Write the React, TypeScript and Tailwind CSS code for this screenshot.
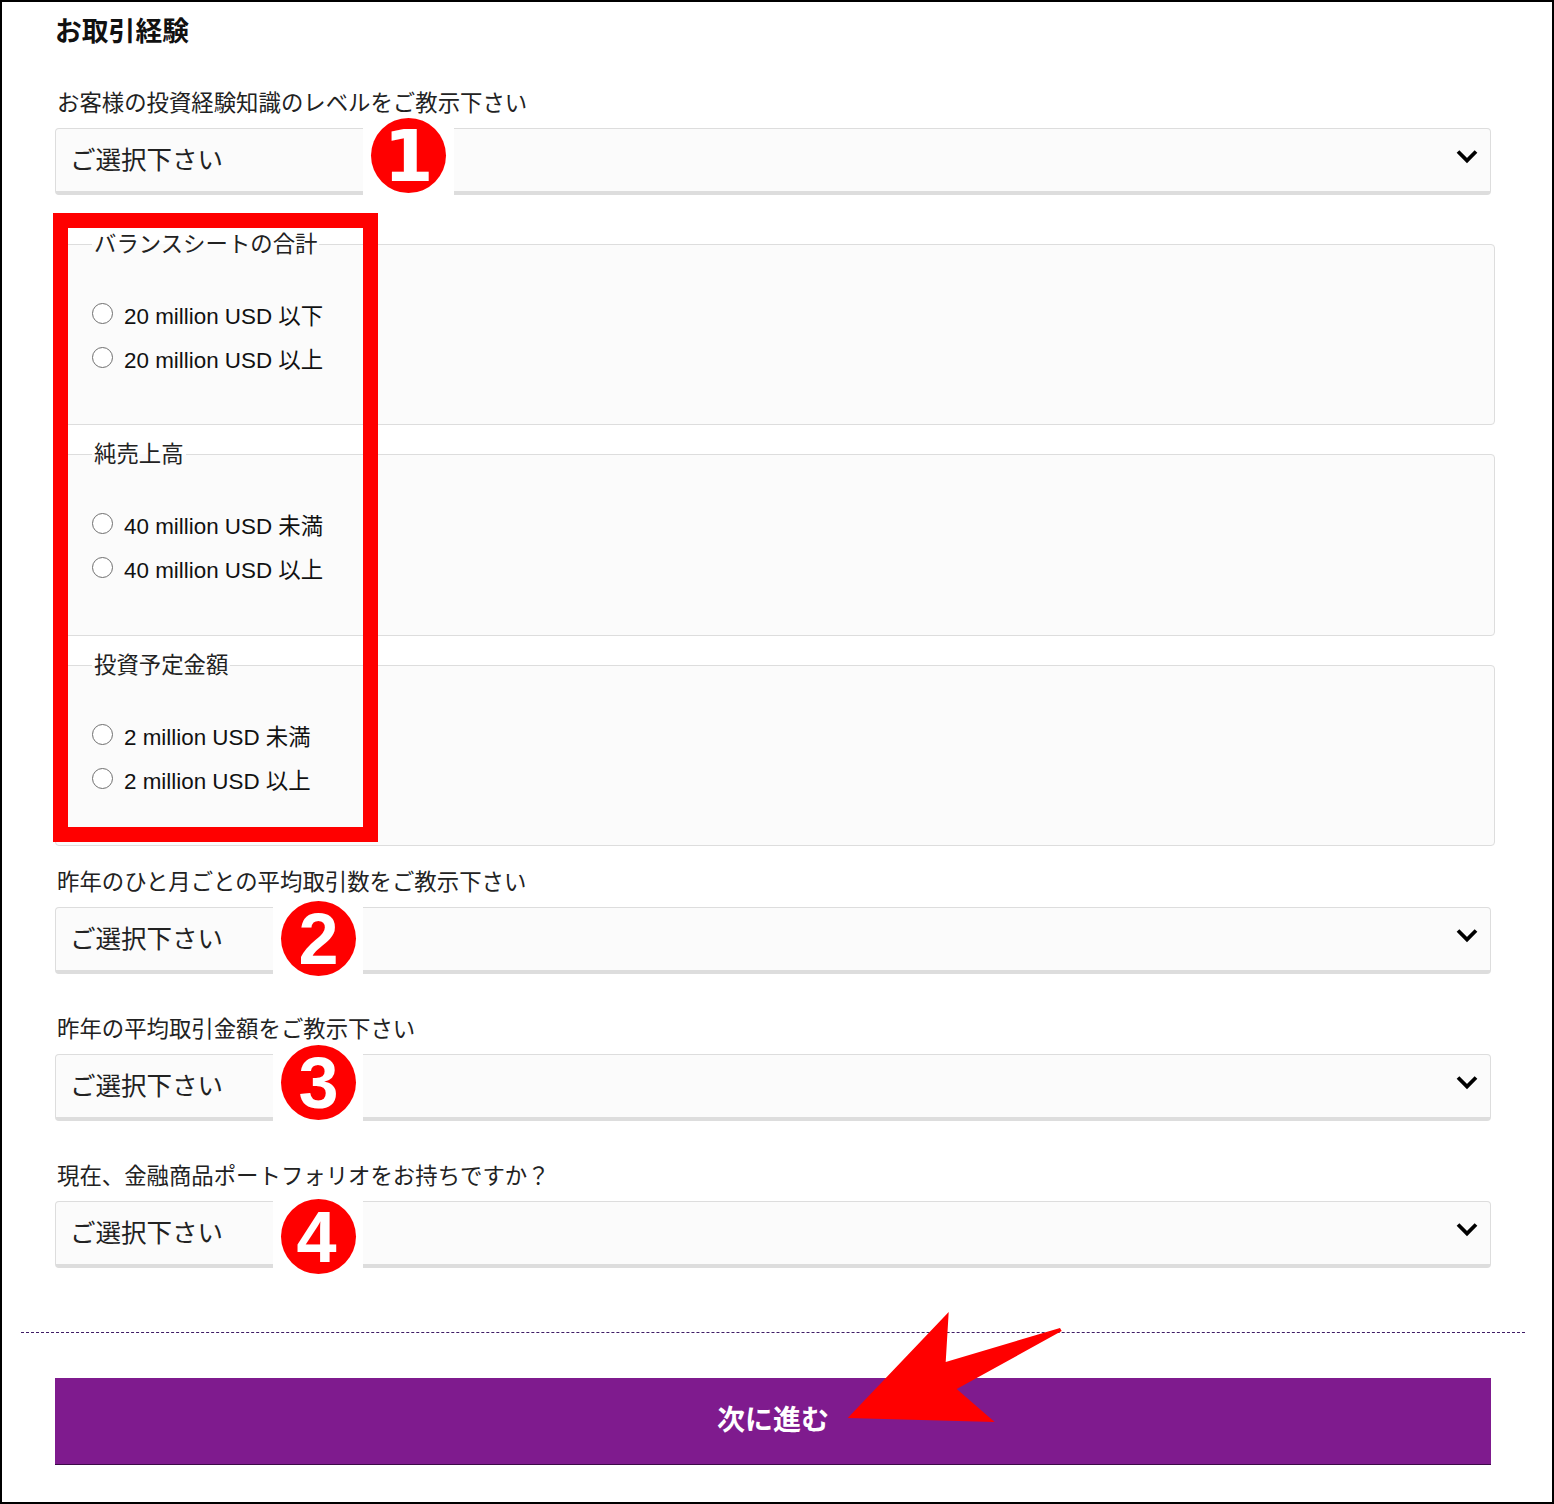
import React from "react";

function Chevron() {
  return (
    <svg className="absolute left-[1400px] top-[20px] w-[24px] h-[18px] pointer-events-none" viewBox="0 0 24 18" fill="none">
      <path d="M3 3.5 L12 12.5 L21 3.5" stroke="#000" strokeWidth="3.8" strokeLinecap="butt" />
    </svg>
  );
}

function SelectField({ label, className = "" }: { label: string; className?: string }) {
  return (
    <div className={className}>
      <label className="block h-[26px] leading-[26px] text-[22.4px] text-[#222] ml-[2px] whitespace-nowrap">{label}</label>
      <div className="relative w-[1436px] mt-[11.5px]">
        <select className="block appearance-none w-full h-[67px] pl-[14px] bg-[#fbfbfb] border border-[#dddddd] border-b-[4px] rounded-[4px] text-[25.5px] text-[#222] outline-none">
          <option>ご選択下さい</option>
        </select>
        <Chevron />
      </div>
    </div>
  );
}

function RadioGroup({ title, options, name, className }: { title: string; options: string[]; name: string; className: string }) {
  return (
    <fieldset className={`w-[1440px] border border-[#dddddd] rounded-[4px] bg-[#fbfbfb] pl-[36px] pr-0 pb-0 ${className}`}>
      <legend className="h-[26px] leading-[28px] text-[22.4px] text-[#222] px-[2px] whitespace-nowrap">{title}</legend>
      <div className="pt-[37px]">
        {options.map((o) => (
          <label key={o} className="flex items-center h-[43.7px] whitespace-nowrap">
            <input
              type="radio"
              name={name}
              className="appearance-none block w-[21px] h-[21px] m-0 mb-[5px] rounded-full border-[1.5px] border-[#6f6f6f] bg-white shrink-0"
            />
            <span className="ml-[11px] mt-[2px] text-[22.4px] leading-[26px] text-[#111]">{o}</span>
          </label>
        ))}
      </div>
    </fieldset>
  );
}

function Badge({ n, left, top, extra = "" }: { n: string; left: string; top: string; extra?: string }) {
  return (
    <div className={`absolute flex items-center justify-center w-[75px] h-[75px] rounded-full bg-[#ff0000] text-white font-bold text-[72px] leading-none ${left} ${top} ${extra}`}>
      {n}
    </div>
  );
}

export default function App() {
  return (
    <div className="relative w-[1554px] h-[1504px] overflow-hidden bg-white border-2 border-black font-['Liberation_Sans','Noto_Sans_CJK_JP',sans-serif]">
      <div className="pt-[12px] pl-[53px]">
        <h1 className="h-[36px] leading-[36px] text-[26.8px] font-bold text-[#111]">お取引経験</h1>

        <SelectField className="mt-[40.5px]" label="お客様の投資経験知識のレベルをご教示下さい" />

        <div className="mt-[36px]">
          <RadioGroup className="h-[194px] mb-[16px]" name="a" title="バランスシートの合計" options={["20 million USD 以下", "20 million USD 以上"]} />
          <RadioGroup className="h-[195px] mb-[16px]" name="b" title="純売上高" options={["40 million USD 未満", "40 million USD 以上"]} />
          <RadioGroup className="h-[194px]" name="c" title="投資予定金額" options={["2 million USD 未満", "2 million USD 以上"]} />
        </div>

        <SelectField className="mt-[23.5px]" label="昨年のひと月ごとの平均取引数をご教示下さい" />
        <SelectField className="mt-[42.5px]" label="昨年の平均取引金額をご教示下さい" />
        <SelectField className="mt-[42.5px]" label="現在、金融商品ポートフォリオをお持ちですか？" />
      </div>

      <div className="mt-[64px] ml-[19px] w-[1504px] border-t border-dashed border-[#3f1c66]" />

      <button className="block mt-[45px] ml-[53px] w-[1436px] h-[87px] bg-[#7f1b8e] border-b border-[#3c0a48] text-white font-bold text-[28px]">
        次に進む
      </button>

      {/* annotations */}
      <div className="absolute left-[361px] top-[116px] w-[91px] h-[80px] bg-white" />
      <div className="absolute left-[271px] top-[898px] w-[90px] h-[76px] bg-white" />
      <div className="absolute left-[271px] top-[1043px] w-[90px] h-[78px] bg-white" />
      <div className="absolute left-[271px] top-[1197px] w-[90px] h-[70px] bg-white" />

      <Badge n="1" left="left-[369px]" top="top-[116px]" extra="font-['DejaVu_Sans']" />
      <Badge n="2" left="left-[279px]" top="top-[899px]" />
      <Badge n="3" left="left-[279px]" top="top-[1043px]" />
      <Badge n="4" left="left-[279px]" top="top-[1197px]" extra="pr-[4px]" />

      <div className="absolute left-[51px] top-[211px] w-[325px] h-[629px] border-[15px] border-[#ff0000]" />

      <svg className="absolute left-[838px] top-[1303px] w-[230px] h-[125px]" viewBox="840 1305 230 125">
        <polygon fill="#ff0000" points="847.7,1418 948.7,1312 945.7,1362 1060,1328 1061.7,1331 956.7,1389 994.7,1422" />
      </svg>
    </div>
  );
}
